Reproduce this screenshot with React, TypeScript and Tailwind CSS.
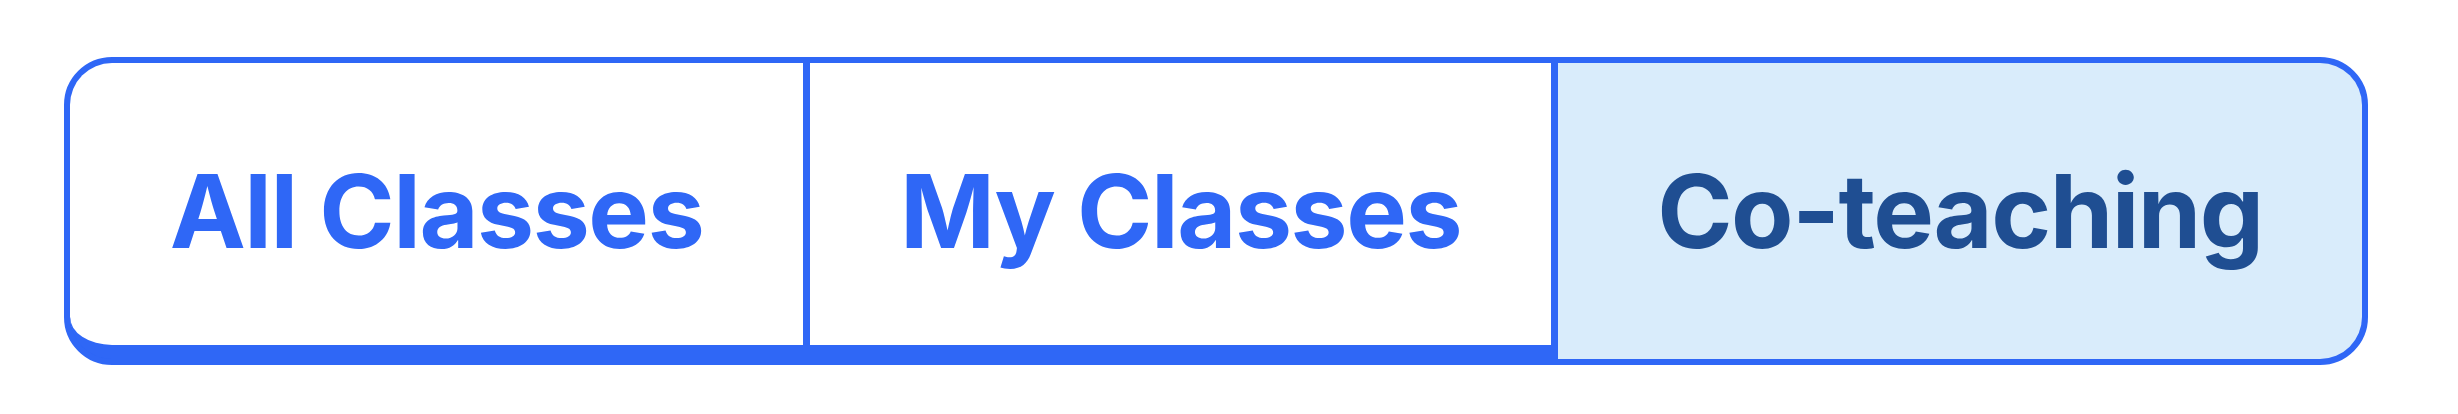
import React from "react"

type Tab = {
  label: string
  width: string
  active?: boolean
}

const tabs: Tab[] = [
  { label: "All Classes", width: "w-[740px] rounded-bl-[42px]" },
  { label: "My Classes", width: "w-[748px]" },
  { label: "Co-teaching", width: "w-[804px]", active: true },
]

const App = () => {
  return (
    <div className="min-h-screen bg-white pl-[64px] pt-[57px]">
      <div
        className="inline-flex h-[308px] overflow-hidden rounded-[48px] border-[6px] border-[#2f67f6] bg-[#2f67f6]"
        style={{ fontFamily: "Inter, 'Noto Sans', sans-serif" }}
      >
        {tabs.map((tab, i) => (
          <div
            key={tab.label}
            className={[
              "flex items-start justify-center pt-[97px] text-[102px] font-bold leading-none tracking-[-1.5px]",
              tab.width,
              i < tabs.length - 1 ? "border-r-[7px] border-[#2f67f6]" : "",
              tab.active
                ? "bg-[#d9ecfb] text-[#1f4e92]"
                : "bg-white text-[#2f67f6] border-b-[14px]",
            ].join(" ")}
          >
            {tab.label}
          </div>
        ))}
      </div>
    </div>
  )
}

export default App
